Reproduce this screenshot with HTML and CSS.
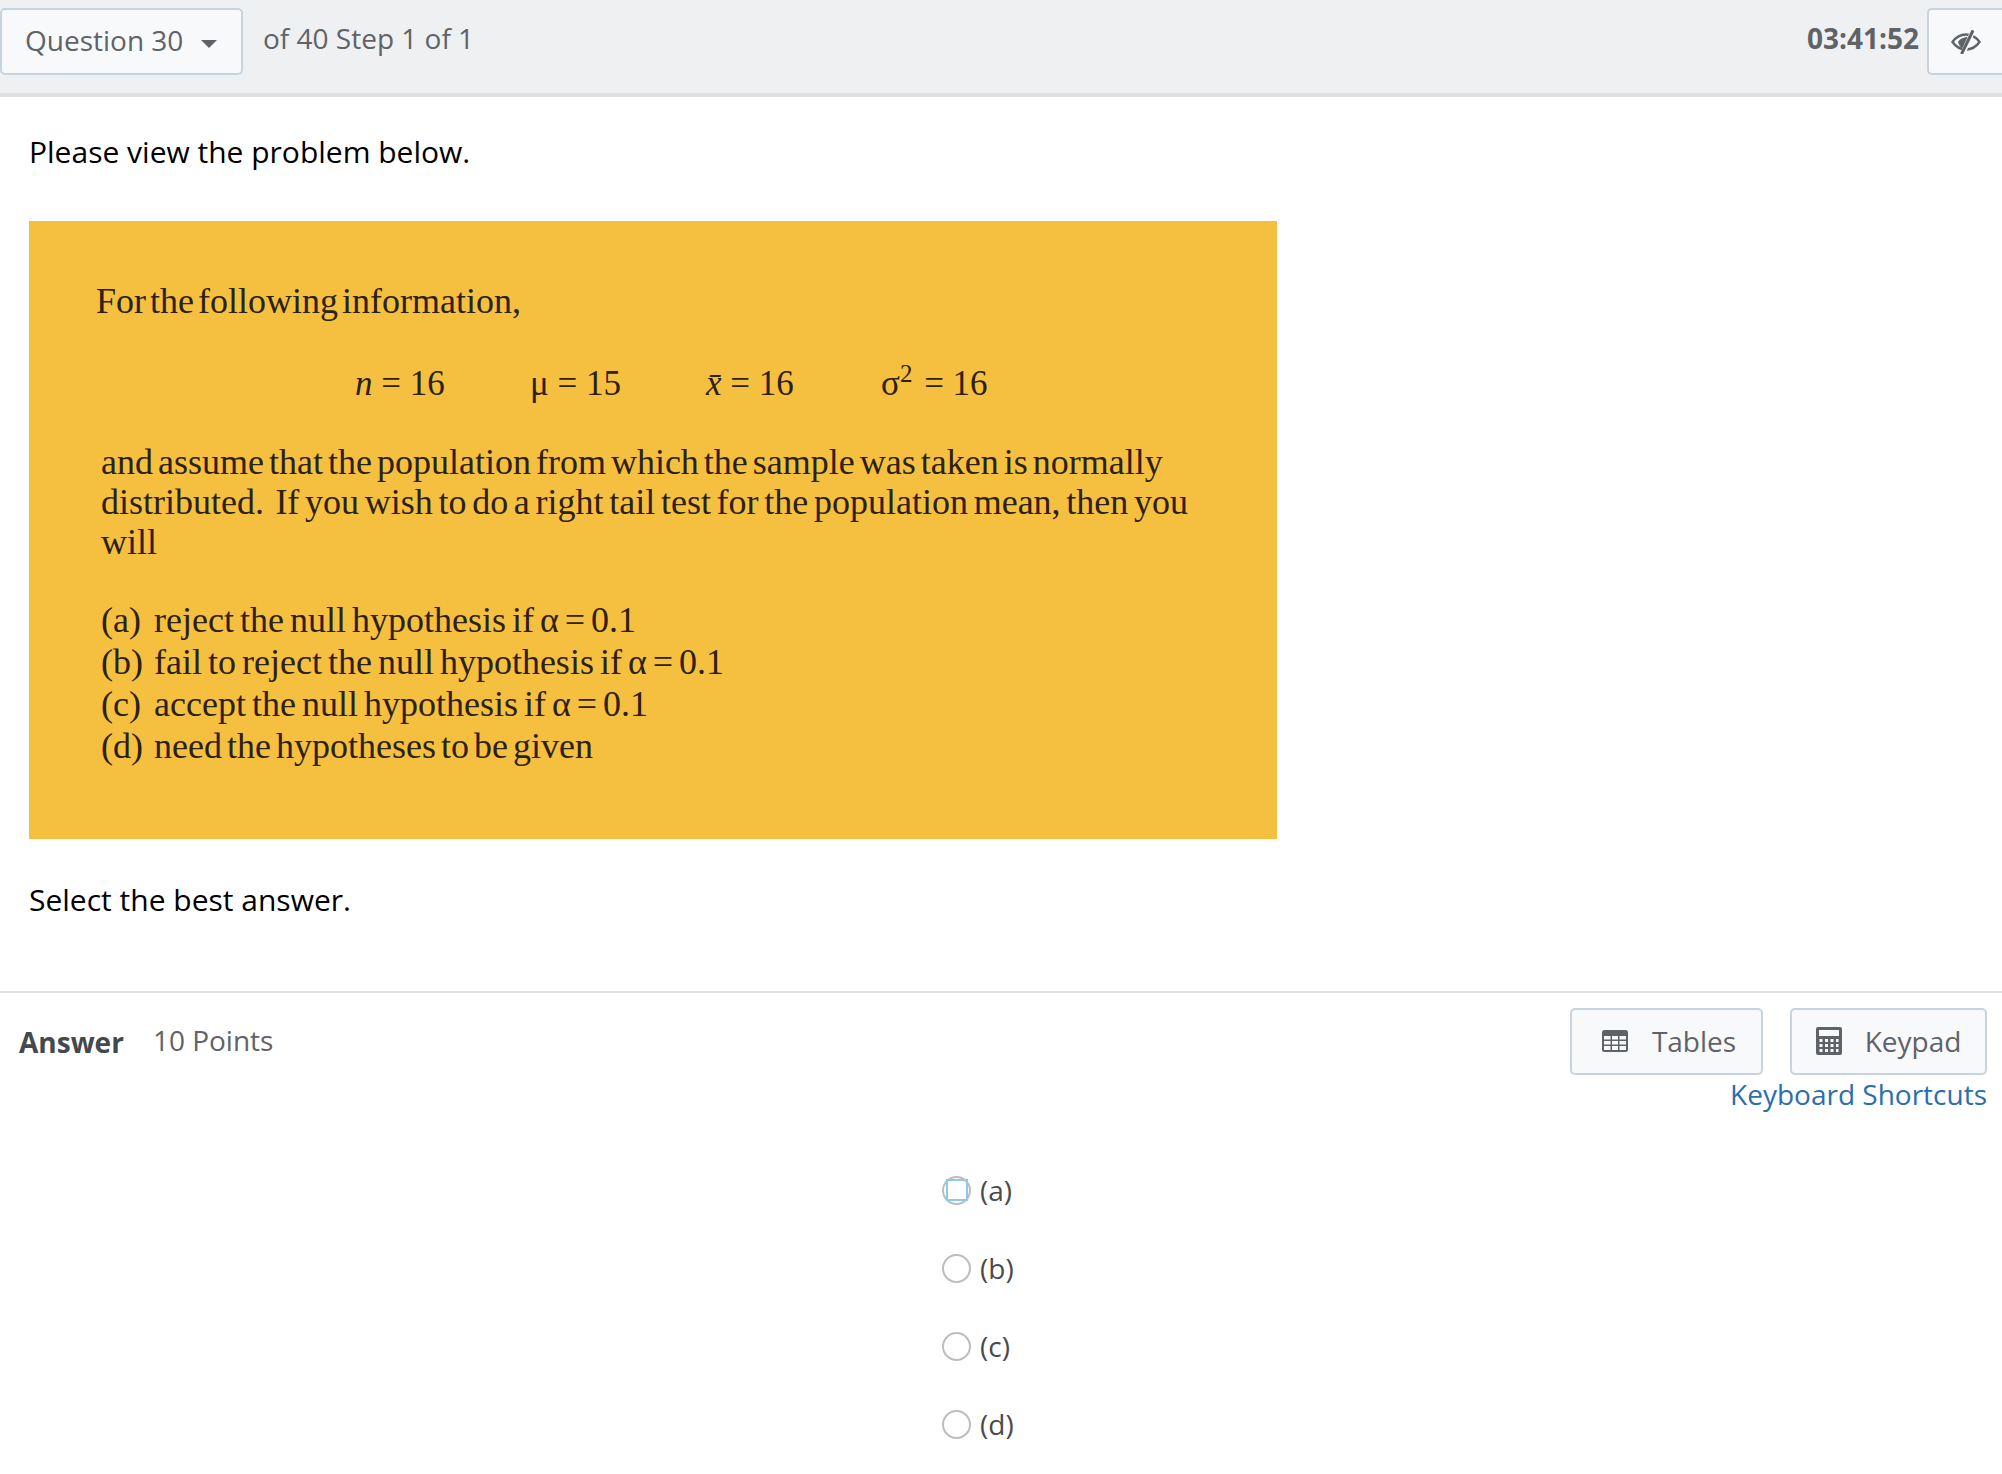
FILE: index.html
```html
<!DOCTYPE html>
<html lang="en">
<head>
<meta charset="utf-8">
<title>Question 30</title>
<link rel="stylesheet" href="styles.css">
</head>
<body>
<header class="topbar">
  <button class="btn question-btn">Question 30<span class="caret"></span></button>
  <span class="progress">of 40 Step 1 of 1</span>
  <span class="spacer"></span>
  <span class="timer">03:41:52</span>
  <button class="btn eye-btn" aria-label="Hide timer">
    <svg class="eye" viewBox="0 0 30 24" width="30" height="24"><path d="M1.5 12C5 7 9.500 4.500 15 4.500S25 7 28.500 12C25 17 20.500 19.500 15 19.500S5 17 1.500 12Z" fill="none" stroke="#5f6368" stroke-width="2.400"/><path d="M7 12c1.500-2.500 4-4.500 9-5l2.500-1-5.500 13c-3-1-5-3.500-6-7Z" fill="#5f6368"/><path d="M21.500 2 12 23" stroke="#f8f9fb" stroke-width="5"/><path d="M21.500 1.500 11 23" stroke="#5f6368" stroke-width="3" stroke-linecap="round"/></svg>
  </button>
</header>
<main class="question">
  <p class="prompt">Please view the problem below.</p>
  <div class="problem">
    <div class="p-line intro">For the following information,</div>
    <div class="math">
      <span class="m m1"><i>n</i> = 16</span>
      <span class="m m2">μ = 15</span>
      <span class="m m3"><i>x̄</i> = 16</span>
      <span class="m m4">σ<sup>2</sup> = 16</span>
    </div>
    <div class="para">
      <div class="p-line l1">and assume that the population from which the sample was taken is normally</div>
      <div class="p-line l2">distributed.&nbsp; If you wish to do a right tail test for the population mean, then you</div>
      <div class="p-line l3">will</div>
    </div>
    <div class="options">
      <div class="opt"><span>(a)</span><span>reject the null hypothesis if α = 0.1</span></div>
      <div class="opt"><span>(b)</span><span>fail to reject the null hypothesis if α = 0.1</span></div>
      <div class="opt"><span>(c)</span><span>accept the null hypothesis if α = 0.1</span></div>
      <div class="opt opt-tight"><span>(d)</span><span>need the hypotheses to be given</span></div>
    </div>
  </div>
  <p class="prompt select">Select the best answer.</p>
</main>
<section class="answer">
  <div class="answer-head">
    <strong class="answer-title">Answer</strong>
    <span class="points">10 Points</span>
    <span class="spacer"></span>
    <div class="tools">
      <div class="tool-btns">
        <button class="btn tool tables">
          <svg viewBox="0 0 26 22" width="26" height="22"><path fill-rule="evenodd" fill="#5f6368" d="M2.500 0h21A2.500 2.500 0 0 1 26 2.500v17a2.500 2.500 0 0 1-2.500 2.500h-21A2.500 2.500 0 0 1 0 19.500v-17A2.500 2.500 0 0 1 2.500 0ZM2 6v3.500h6.500V6ZM10 6v3.500h6V6ZM17.500 6v3.500H24V6ZM2 11v3.500h6.500V11ZM10 11v3.500h6V11ZM17.500 11v3.500H24V11ZM2 16v4h6.500v-4ZM10 16v4h6v-4ZM17.500 16v4H24v-4Z"/></svg>
          <span>Tables</span>
        </button>
        <button class="btn tool keypad">
          <svg viewBox="0 0 26 28" width="26" height="28"><path fill-rule="evenodd" fill="#5f6368" d="M2 0h22a2 2 0 0 1 2 2v24a2 2 0 0 1-2 2H2a2 2 0 0 1-2-2V2a2 2 0 0 1 2-2ZM3 3v6h20V3ZM3.500 12v3h3v-3ZM9 12v3h3v-3ZM14.500 12v3h3v-3ZM20 12v3h2.500v-3ZM3.500 17v3h3v-3ZM9 17v3h3v-3ZM14.500 17v3h3v-3ZM20 17v3h2.500v-3ZM3.500 22v3h3v-3ZM9 22v3h3v-3ZM14.500 22v3h3v-3ZM20 22v3h2.500v-3Z"/></svg>
          <span>Keypad</span>
        </button>
      </div>
      <a class="shortcuts" href="#">Keyboard Shortcuts</a>
    </div>
  </div>
  <div class="choices">
    <label class="choice"><span class="radio focused"></span>(a)</label>
    <label class="choice"><span class="radio"></span>(b)</label>
    <label class="choice"><span class="radio"></span>(c)</label>
    <label class="choice"><span class="radio"></span>(d)</label>
  </div>
</section>
</body>
</html>
```
FILE: styles.css
```css
* { box-sizing: border-box; }
html, body { margin: 0; padding: 0; background: #fff; }
body { font-family: "Open Sans", sans-serif; color: #000; height: 1474px; overflow: hidden; }
.spacer { flex: 1; }

.btn {
  font-family: inherit;
  background: #f8f9fb;
  border: 2px solid #c5d4de;
  border-radius: 5px;
  color: #5f6368;
  padding: 0;
}

.topbar {
  height: 97px;
  background: #eff0f2;
  border-bottom: 4px solid #e0e0e0;
  display: flex;
  align-items: flex-start;
  padding-top: 8px;
}
.question-btn {
  width: 243px;
  height: 67px;
  font-size: 28px;
  display: flex;
  align-items: center;
  padding: 0 0 4px 23px;
}
.caret {
  width: 0; height: 0;
  border-left: 8px solid transparent;
  border-right: 8px solid transparent;
  border-top: 8px solid #5f6368;
  margin-left: 18px;
  margin-top: 8px;
}
.progress { font-size: 28px; color: #5f6368; margin-left: 20px; line-height: 60px; }
.timer { font-size: 28px; font-weight: 700; color: #5f6368; line-height: 60px; margin-right: 8px; }
.eye-btn {
  width: 75px;
  height: 67px;
  border-right: 0;
  border-radius: 5px 0 0 5px;
  display: flex;
  align-items: center;
  padding-left: 22px;
}

.question { padding: 0 29px; }
.prompt { margin: 0; font-size: 30px; line-height: 42px; }
.question > .prompt:first-child { padding-top: 34px; }
.select { margin-top: 40px; }

.problem {
  margin-top: 48px;
  width: 1248px;
  height: 618px;
  background: #f5c040;
  font-family: "Liberation Serif", serif;
  font-size: 36px;
  color: #2d2114;
  padding: 60px 0 0 72px;
  overflow: hidden;
}
.p-line, .opt { white-space: nowrap; }
.intro { margin-left: -5px; line-height: 40px; word-spacing: -5px; }
.math { display: flex; margin-top: 43px; margin-left: 254px; line-height: 40px; font-size: 35px; }
.m1 { width: 175px; }
.m2 { width: 176px; }
.m3 { width: 175px; }
.m sup { font-size: 25px; line-height: 0; margin-right: 3px; }
.para { margin-top: 38px; line-height: 40px; }
.l1 { word-spacing: -4px; }
.l2 { word-spacing: -3.3px; }
.options { margin-top: 37px; }
.opt { display: grid; grid-template-columns: 53px auto; justify-content: start; line-height: 42px; word-spacing: -3px; }
.opt-tight { word-spacing: -4px; }

.answer-head {
  margin-top: 70px;
  border-top: 2px solid #e0e0e0;
  display: flex;
  align-items: flex-start;
  padding: 15px 15px 0 19px;
}
.answer-title { font-size: 28px; font-weight: 700; color: #45494e; line-height: 40px; margin-top: 14px; }
.points { font-size: 28px; color: #5f6368; line-height: 40px; margin-left: 29px; margin-top: 12px; }
.tools { display: flex; flex-direction: column; align-items: flex-end; }
.tool-btns { display: flex; gap: 27px; }
.tool {
  height: 67px;
  font-size: 28px;
  display: flex;
  align-items: center;
  justify-content: center;
  padding-bottom: 2px;
}
.tables { width: 193px; gap: 24px; padding-left: 5px; }
.keypad { width: 197px; gap: 23px; }
.shortcuts { font-size: 28px; color: #2a6ead; text-decoration: none; line-height: 40px; margin-top: -1px; }

.choices { margin-top: 56px; padding-left: 942px; display: flex; flex-direction: column; gap: 38px; }
.choice { display: flex; align-items: center; height: 40px; font-size: 28px; color: #4a4a4a; gap: 9px; }
.radio {
  width: 29px; height: 29px;
  border-radius: 50%;
  border: 2px solid #bdbdbd;
  background: #fff;
  display: flex;
  align-items: center;
  justify-content: center;
}
.radio.focused::after {
  content: "";
  width: 18px; height: 18px;
  border: 2px solid #8ccbe8;
}
```
